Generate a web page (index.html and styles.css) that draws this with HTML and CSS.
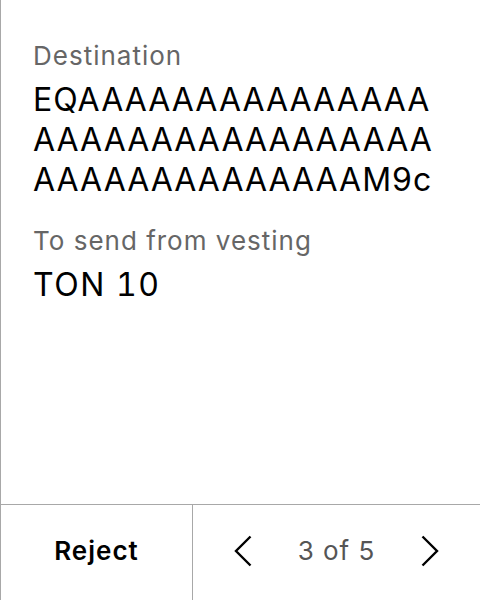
FILE: index.html
```html
<!DOCTYPE html>
<html>
<head>
<meta charset="utf-8">
<link rel="stylesheet" href="styles.css">
</head>
<body>
<div class="screen">
  <main class="content">
    <div class="field">
      <div class="label">Destination</div>
      <div class="value address">EQAAAAAAAAAAAAAAAAAAAAAAAAAAAAAAAAAAAAAAAAAAAAAAM9c</div>
    </div>
    <div class="field">
      <div class="label">To send from vesting</div>
      <div class="value amount">TON 10</div>
    </div>
  </main>
  <footer class="actions">
    <button class="reject">Reject</button>
    <div class="pager">
      <svg class="chev" width="18" height="32" viewBox="0 0 18 32"><path d="M16.5 1.5 L2 16 L16.5 30.5" fill="none" stroke="#000" stroke-width="2.4"/></svg>
      <span class="count">3 of 5</span>
      <svg class="chev" width="18" height="32" viewBox="0 0 18 32"><path d="M1.5 1.5 L16 16 L1.5 30.5" fill="none" stroke="#000" stroke-width="2.4"/></svg>
    </div>
  </footer>
</div>
</body>
</html>
```
FILE: styles.css
```css
html, body {
  margin: 0;
  padding: 0;
  background: #fff;
}
body {
  font-family: Inter, "Noto Sans", sans-serif;
  color: #000;
}
.screen {
  width: 480px;
  height: 600px;
  box-sizing: border-box;
  border-left: 1px solid #a8a8a8;
  display: flex;
  flex-direction: column;
}
.content {
  flex: 1;
  padding: 40px 32px 0 32px;
}
.field + .field {
  margin-top: 25px;
}
.label {
  font-size: 26px;
  line-height: 32px;
  letter-spacing: 1px;
  color: #666;
}
.value {
  font-size: 32px;
  line-height: 40px;
  letter-spacing: 1px;
  margin-top: 8px;
}
.address {
  word-break: break-all;
}
.amount {
  font-feature-settings: "tnum";
  letter-spacing: 1.5px;
}
.actions {
  height: 96px;
  border-top: 1px solid #a8a8a8;
  display: flex;
  box-sizing: border-box;
}
.reject {
  width: 192px;
  border: none;
  border-right: 1px solid #a8a8a8;
  background: none;
  font-family: Inter, sans-serif;
  font-weight: 600;
  font-size: 26px;
  letter-spacing: 1px;
  color: #000;
  padding: 0 0 4px 0;
}
.pager {
  flex: 1;
  display: flex;
  align-items: center;
  justify-content: center;
  gap: 46px;
  padding-bottom: 4px;
}
.count {
  font-size: 26px;
  letter-spacing: 1px;
  color: #555;
}
.chev {
  display: block;
}
```
